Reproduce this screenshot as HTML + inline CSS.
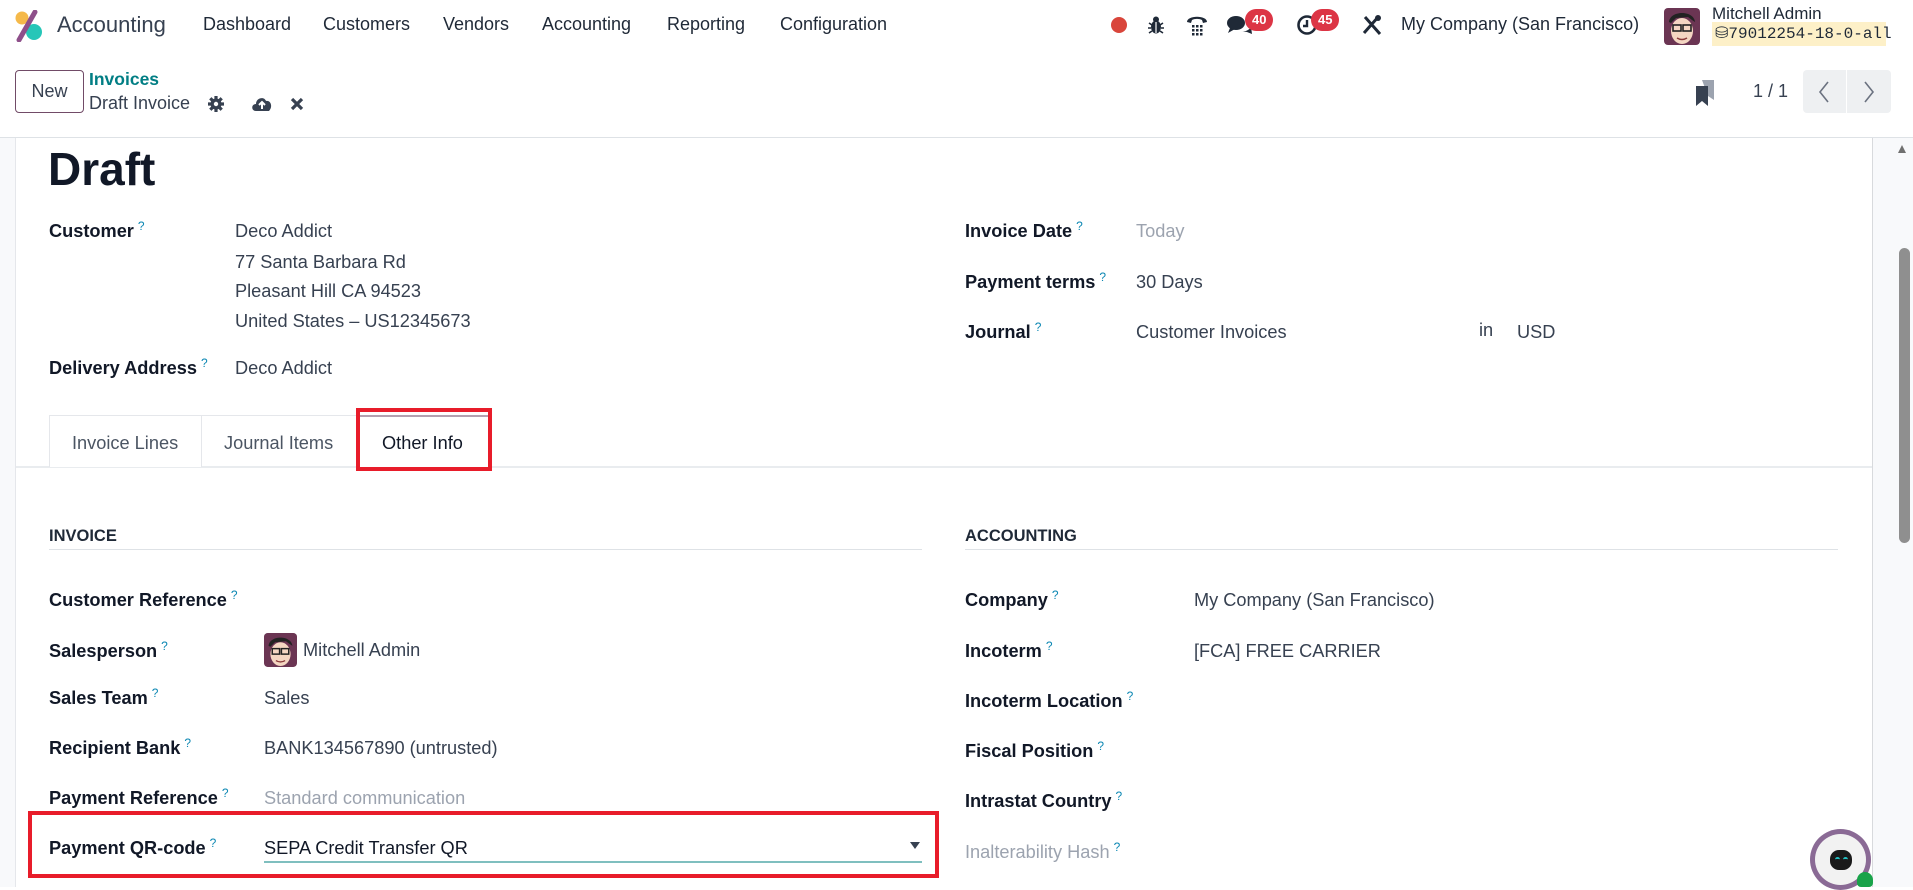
<!DOCTYPE html>
<html><head><meta charset="utf-8"><style>
*{box-sizing:border-box;margin:0;padding:0}
body{width:1913px;height:887px;overflow:hidden;background:#fff;font-family:"Liberation Sans",sans-serif;color:#374151;position:relative}
.a{position:absolute;white-space:nowrap}
.nav{font-size:18px;color:#1f2937;top:14px}
.lbl{font-weight:bold;font-size:18.2px;color:#111827}
.val{font-size:18.2px;color:#374151}
.q{color:#0b87b3;font-size:12px;font-weight:normal;vertical-align:super;margin-left:4px}
.badge{background:#dc3545;color:#fff;font-weight:bold;font-size:13px;border-radius:11px;height:22px;line-height:22px;padding:0 7px;text-align:center}
</style></head><body>
<svg class="a" style="left:14px;top:10px" width="30" height="32" viewBox="0 0 30 32">
<circle cx="8" cy="8" r="6.5" fill="#f5b94a"/><circle cx="20" cy="22" r="8" fill="#26c6b8"/>
<path d="M21 2 L5 30" stroke="#8e4f8a" stroke-width="5" stroke-linecap="round"/></svg>
<div class="a" style="left:57px;top:12px;font-size:22px;color:#374151">Accounting</div>
<div class="a nav" style="left:203px">Dashboard</div>
<div class="a nav" style="left:323px">Customers</div>
<div class="a nav" style="left:443px">Vendors</div>
<div class="a nav" style="left:542px">Accounting</div>
<div class="a nav" style="left:667px">Reporting</div>
<div class="a nav" style="left:780px">Configuration</div>

<div class="a" style="left:1111px;top:17px;width:16px;height:16px;border-radius:50%;background:#d9453b"></div>
<svg class="a" style="left:1148px;top:15px" width="16" height="20" viewBox="0 0 16 20"><ellipse cx="8" cy="12" rx="5" ry="6.5" fill="#1f2937"/><circle cx="8" cy="4.5" r="3" fill="#1f2937"/><path d="M1 8l3 2M15 8l-3 2M0 13h3M16 13h-3M1 18l3-2M15 18l-3-2" stroke="#1f2937" stroke-width="1.6"/><path d="M8 7v11" stroke="#fff" stroke-width="1.2"/></svg>
<svg class="a" style="left:1185px;top:13px" width="24" height="24" viewBox="0 0 24 24"><path d="M2 9 C2 2 22 2 22 9 L18 10 L17 7 C14 5.5 10 5.5 7 7 L6 10 Z" fill="#1f2937"/><g fill="#1f2937"><rect x="7" y="12" width="2.5" height="2.5"/><rect x="11" y="12" width="2.5" height="2.5"/><rect x="15" y="12" width="2.5" height="2.5"/><rect x="7" y="16" width="2.5" height="2.5"/><rect x="11" y="16" width="2.5" height="2.5"/><rect x="15" y="16" width="2.5" height="2.5"/><rect x="7" y="20" width="2.5" height="2.5"/><rect x="11" y="20" width="2.5" height="2.5"/><rect x="15" y="20" width="2.5" height="2.5"/></g></svg>
<svg class="a" style="left:1227px;top:14px" width="26" height="22" viewBox="0 0 26 22"><ellipse cx="9" cy="9" rx="9" ry="7" fill="#1f2937"/><path d="M3 14 L1 19 L8 15Z" fill="#1f2937"/><path d="M14 17 C19 18 22 16 24 13 L25 20 L20 18" fill="#1f2937"/></svg>
<div class="a badge" style="left:1245px;top:9px">40</div>
<svg class="a" style="left:1296px;top:14px" width="22" height="22" viewBox="0 0 22 22"><circle cx="11" cy="11" r="8.5" fill="none" stroke="#1f2937" stroke-width="2.6"/><path d="M11 6v6h-4" stroke="#1f2937" stroke-width="2.4" fill="none"/></svg>
<div class="a badge" style="left:1311px;top:9px">45</div>
<svg class="a" style="left:1362px;top:14px" width="20" height="22" viewBox="0 0 20 22"><path d="M3 3 L18 20 M17 2 L2 19" stroke="#1f2937" stroke-width="3"/><circle cx="16" cy="4" r="3" fill="#1f2937"/></svg>
<div class="a nav" style="left:1401px">My Company (San Francisco)</div>
<svg class="a" style="left:1664px;top:8px" width="36" height="37" viewBox="0 0 36 37"><rect width="36" height="37" rx="4" fill="#6b3553"/><ellipse cx="18" cy="23" rx="11" ry="13" fill="#f4d6c2"/><path d="M5 14 C6 2 30 2 31 14 L28 12 L24 9 L12 10 L7 15Z" fill="#222"/><rect x="9" y="17" width="8" height="6" fill="none" stroke="#222" stroke-width="1.6"/><rect x="19" y="17" width="8" height="6" fill="none" stroke="#222" stroke-width="1.6"/><path d="M13 30 Q18 33 23 30" stroke="#8a3a3a" stroke-width="1.5" fill="none"/></svg>
<div class="a" style="left:1712px;top:4px;font-size:17px;color:#1f2937">Mitchell Admin</div>
<div class="a" style="left:1712px;top:22px;height:24px;width:174px;background:#fdf0c8;font-family:'Liberation Mono',monospace;font-size:16px;line-height:24px;color:#1f2937;padding-left:3px">&#9921;79012254-18-0-all</div>

<div class="a" style="left:15px;top:70px;width:69px;height:43px;border:1px solid #714b67;border-radius:4px;font-size:18px;color:#374151;text-align:center;line-height:41px">New</div>
<div class="a" style="left:89px;top:69px;font-size:17.5px;color:#017e84;font-weight:bold">Invoices</div>
<div class="a" style="left:89px;top:93px;font-size:18px;color:#374151">Draft Invoice</div>
<svg class="a" style="left:207px;top:95px" width="18" height="18" viewBox="0 0 18 18"><g stroke="#374151" stroke-width="3.2"><path d="M9 1v16M1 9h16M3.3 3.3l11.4 11.4M14.7 3.3L3.3 14.7"/></g><circle cx="9" cy="9" r="5.5" fill="#374151"/><circle cx="9" cy="9" r="2.2" fill="#fff"/></svg>
<svg class="a" style="left:251px;top:95px" width="22" height="17" viewBox="0 0 22 17"><path d="M5 16 C0 16 0 9 5 9 C5 3 13 1 15 6 C20 5 22 12 18 16Z" fill="#374151"/><path d="M11 14V8M8 10l3-3 3 3" stroke="#fff" stroke-width="2" fill="none"/></svg>
<svg class="a" style="left:290px;top:97px" width="14" height="14" viewBox="0 0 14 14"><path d="M2 2l10 10M12 2L2 12" stroke="#374151" stroke-width="3.2"/></svg>
<svg class="a" style="left:1694px;top:80px" width="22" height="26" viewBox="0 0 22 26"><path d="M8 0h12v20l-6-4z" fill="#9ca3af"/><path d="M2 6h12v20l-6-5-6 5z" fill="#374151"/></svg>
<div class="a" style="left:1753px;top:81px;font-size:18px;color:#374151">1 / 1</div>
<div class="a" style="left:1803px;top:70px;width:43px;height:43px;background:#eef0f2;border-radius:4px 0 0 4px"></div>
<div class="a" style="left:1847px;top:70px;width:44px;height:43px;background:#eef0f2;border-radius:0 4px 4px 0"></div>
<svg class="a" style="left:1817px;top:80px" width="14" height="24" viewBox="0 0 14 24"><path d="M11 2L3 12l8 10" stroke="#6b7280" stroke-width="1.6" fill="none"/></svg>
<svg class="a" style="left:1862px;top:80px" width="14" height="24" viewBox="0 0 14 24"><path d="M3 2l8 10-8 10" stroke="#6b7280" stroke-width="1.6" fill="none"/></svg>

<div class="a" style="left:0;top:137px;width:1913px;height:1px;background:#dee2e6"></div>
<div class="a" style="left:0;top:138px;width:16px;height:749px;background:#f8f9fb;border-right:1px solid #e5e7eb"></div>
<div class="a" style="left:1872px;top:138px;width:41px;height:749px;background:#f8f9fb;border-left:1px solid #d8dadd"></div>
<svg class="a" style="left:1896px;top:143px" width="12" height="12" viewBox="0 0 12 12"><path d="M6 2l4 8H2z" fill="#707070"/></svg>
<div class="a" style="left:1899px;top:248px;width:11px;height:295px;background:#8f8f8f;border-radius:6px"></div>

<div class="a" style="left:48px;top:142px;font-size:46px;font-weight:bold;color:#111827">Draft</div>

<div class="a lbl" style="left:49px;top:219px">Customer<span class="q">?</span></div>
<div class="a val" style="left:235px;top:221px">Deco Addict</div>
<div class="a val" style="left:235px;top:252px">77 Santa Barbara Rd</div>
<div class="a val" style="left:235px;top:281px">Pleasant Hill CA 94523</div>
<div class="a val" style="left:235px;top:311px">United States – US12345673</div>
<div class="a lbl" style="left:49px;top:356px">Delivery Address<span class="q">?</span></div>
<div class="a val" style="left:235px;top:358px">Deco Addict</div>

<div class="a lbl" style="left:965px;top:219px">Invoice Date<span class="q">?</span></div>
<div class="a val" style="left:1136px;top:221px;color:#9ca3af">Today</div>
<div class="a lbl" style="left:965px;top:270px">Payment terms<span class="q">?</span></div>
<div class="a val" style="left:1136px;top:272px">30 Days</div>
<div class="a lbl" style="left:965px;top:320px">Journal<span class="q">?</span></div>
<div class="a val" style="left:1136px;top:322px">Customer Invoices</div>
<div class="a val" style="left:1479px;top:320px">in</div>
<div class="a val" style="left:1517px;top:322px">USD</div>

<div class="a" style="left:16px;top:466px;width:1856px;height:2px;background:#e9ecef"></div>
<div class="a" style="left:49px;top:415px;width:153px;height:52px;border:1px solid #e5e7eb;border-bottom:none;background:#fff"></div>
<div class="a" style="left:201px;top:415px;width:156px;height:52px;border:1px solid #e5e7eb;border-bottom:none;border-left:none"></div>
<div class="a" style="left:357px;top:415px;width:134px;height:53px;border:1px solid #e5e7eb;border-top:2px solid #b3a1b0;border-bottom:none;background:#fff"></div>
<div class="a val" style="left:72px;top:433px;color:#4b5563">Invoice Lines</div>
<div class="a val" style="left:224px;top:433px;color:#4b5563">Journal Items</div>
<div class="a val" style="left:382px;top:433px;color:#111827">Other Info</div>
<div class="a" style="left:356px;top:408px;width:136px;height:63px;border:4px solid #e81c2a"></div>

<div class="a" style="left:49px;top:527px;font-weight:bold;font-size:16.5px;color:#1f2937">INVOICE</div>
<div class="a" style="left:49px;top:549px;width:873px;height:1px;background:#dee2e6"></div>
<div class="a" style="left:965px;top:527px;font-weight:bold;font-size:16.5px;color:#1f2937">ACCOUNTING</div>
<div class="a" style="left:965px;top:549px;width:873px;height:1px;background:#dee2e6"></div>

<div class="a lbl" style="left:49px;top:588px">Customer Reference<span class="q">?</span></div>
<div class="a lbl" style="left:49px;top:639px">Salesperson<span class="q">?</span></div>
<svg class="a" style="left:264px;top:633px" width="33" height="34" viewBox="0 0 36 37"><rect width="36" height="37" rx="4" fill="#6b3553"/><ellipse cx="18" cy="23" rx="11" ry="13" fill="#f4d6c2"/><path d="M5 14 C6 2 30 2 31 14 L28 12 L24 9 L12 10 L7 15Z" fill="#222"/><rect x="9" y="17" width="8" height="6" fill="none" stroke="#222" stroke-width="1.6"/><rect x="19" y="17" width="8" height="6" fill="none" stroke="#222" stroke-width="1.6"/><path d="M13 30 Q18 33 23 30" stroke="#8a3a3a" stroke-width="1.5" fill="none"/></svg>
<div class="a val" style="left:303px;top:640px">Mitchell Admin</div>
<div class="a lbl" style="left:49px;top:686px">Sales Team<span class="q">?</span></div>
<div class="a val" style="left:264px;top:688px">Sales</div>
<div class="a lbl" style="left:49px;top:736px">Recipient Bank<span class="q">?</span></div>
<div class="a val" style="left:264px;top:738px">BANK134567890 (untrusted)</div>
<div class="a lbl" style="left:49px;top:786px">Payment Reference<span class="q">?</span></div>
<div class="a val" style="left:264px;top:788px;color:#9ca3af">Standard communication</div>
<div class="a lbl" style="left:49px;top:836px">Payment QR-code<span class="q">?</span></div>
<div class="a val" style="left:264px;top:838px;color:#111827">SEPA Credit Transfer QR</div>
<svg class="a" style="left:910px;top:842px" width="10" height="8" viewBox="0 0 10 8"><path d="M0 0h10L5 7z" fill="#374151"/></svg>
<div class="a" style="left:264px;top:861px;width:658px;height:2px;background:#7fbfbf"></div>
<div class="a" style="left:28px;top:811px;width:911px;height:67px;border:4px solid #e81c2a"></div>

<div class="a lbl" style="left:965px;top:588px">Company<span class="q">?</span></div>
<div class="a val" style="left:1194px;top:590px">My Company (San Francisco)</div>
<div class="a lbl" style="left:965px;top:639px">Incoterm<span class="q">?</span></div>
<div class="a val" style="left:1194px;top:641px">[FCA] FREE CARRIER</div>
<div class="a lbl" style="left:965px;top:689px">Incoterm Location<span class="q">?</span></div>
<div class="a lbl" style="left:965px;top:739px">Fiscal Position<span class="q">?</span></div>
<div class="a lbl" style="left:965px;top:789px">Intrastat Country<span class="q">?</span></div>
<div class="a lbl" style="left:965px;top:840px;color:#9ca3af;font-weight:normal">Inalterability Hash<span class="q">?</span></div>

<div class="a" style="left:1810px;top:829px;width:61px;height:61px;border-radius:50%;background:#8a6a95"></div>
<div class="a" style="left:1815px;top:834px;width:51px;height:51px;border-radius:50%;background:#f2f2f2"></div>
<div class="a" style="left:1830px;top:850px;width:22px;height:20px;border-radius:9px;background:#1a1a1a"></div>
<div class="a" style="left:1835px;top:857px;width:5px;height:3px;border-top:2px solid #22c1c3;border-radius:3px 3px 0 0"></div>
<div class="a" style="left:1843px;top:857px;width:5px;height:3px;border-top:2px solid #22c1c3;border-radius:3px 3px 0 0"></div>
<div class="a" style="left:1857px;top:872px;width:16px;height:15px;border-radius:8px 8px 4px 4px;background:#19a34a"></div>
</body></html>
